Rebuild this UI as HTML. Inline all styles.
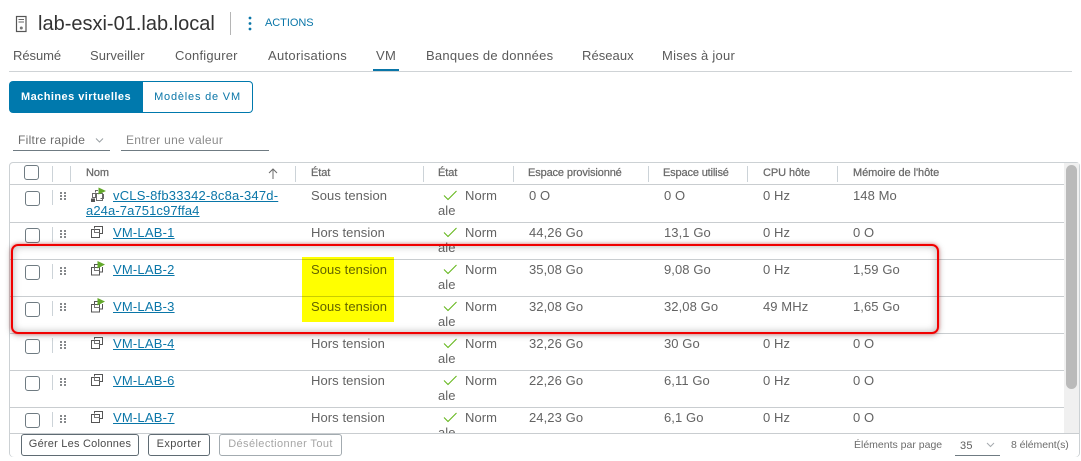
<!DOCTYPE html>
<html><head><meta charset="utf-8">
<style>
html,body{margin:0;padding:0;background:#fff}
#p{position:relative;width:1081px;height:461px;overflow:hidden;background:#fff;font-family:"Liberation Sans",sans-serif;color:#565656;font-size:13px}
#p div,#p a,#p svg{position:absolute;white-space:nowrap}
.t{font-size:13px;line-height:16px;letter-spacing:.08px;color:#636363}
.tab{top:47px;font-size:13px;line-height:18px;letter-spacing:.15px;color:#5a5a5a}
.h{top:166px;font-size:11px;line-height:14px;color:#6a6a6a;letter-spacing:-.08px;-webkit-text-stroke:.25px #6a6a6a}
.sep{width:1px;background:#ccd3d8}
.line{left:10px;width:1054px;height:1px;background:#c9cdd0}
.cb{left:25px;width:13px;height:13px;border:1px solid #6f7b82;border-radius:3px;background:#fff}
.lk{color:#0a76a8;text-decoration:underline;font-size:13px;line-height:16px;letter-spacing:.2px}
.btn{top:434px;height:22px;border:1px solid #5f6b73;border-radius:3px;font-size:11px;line-height:19px;text-align:center;color:#4a4a4a;box-sizing:border-box;background:#fff}
</style></head><body><div id="p">

<!-- Header -->
<svg style="left:15px;top:15px" width="13" height="18" viewBox="0 0 13 18"><rect x="1.500" y="1.500" width="9.500" height="15" fill="none" stroke="#555" stroke-width="1.200"/><path d="M3.500 4.500h5.500M3.500 7h5.500" stroke="#666"/><circle cx="6.300" cy="13" r="1.500" fill="#777"/></svg>
<div style="left:38px;top:10px;font-size:20px;line-height:28px;color:#333">lab-esxi-01.lab.local</div>
<div class="sep" style="left:230px;top:12px;height:23px;background:#b5b5b5"></div>
<svg style="left:247px;top:15px" width="6" height="17" viewBox="0 0 6 17"><circle cx="3" cy="3" r="1.400" fill="#0a76a8"/><circle cx="3" cy="8.500" r="1.400" fill="#0a76a8"/><circle cx="3" cy="14" r="1.400" fill="#0a76a8"/></svg>
<div style="left:265px;top:16px;font-size:11px;line-height:14px;color:#0a76a8;letter-spacing:-.05px">ACTIONS</div>

<!-- Tabs -->
<div class="tab" style="left:13px;letter-spacing:-.05px">Résumé</div>
<div class="tab" style="left:90px;letter-spacing:.05px">Surveiller</div>
<div class="tab" style="left:175px;letter-spacing:.2px">Configurer</div>
<div class="tab" style="left:268px;letter-spacing:.3px">Autorisations</div>
<div class="tab" style="left:376px;letter-spacing:.3px">VM</div>
<div class="tab" style="left:426px;letter-spacing:.25px">Banques de données</div>
<div class="tab" style="left:582px;letter-spacing:.05px">Réseaux</div>
<div class="tab" style="left:662px;letter-spacing:.25px">Mises à jour</div>
<div style="left:9px;top:71px;width:1063px;height:1px;background:#cfd3d6"></div>
<div style="left:373px;top:69px;width:26px;height:2px;background:#0a76a8"></div>

<!-- Segmented buttons -->
<div style="left:9px;top:81px;width:134px;height:32px;background:#0079ad;border-radius:4px 0 0 4px;color:#fff;font-size:11px;line-height:32px;font-weight:bold;text-align:center;letter-spacing:.45px">Machines virtuelles</div>
<div style="left:143px;top:81px;width:110px;height:32px;box-sizing:border-box;border:1px solid #0079ad;border-left:0;border-radius:0 4px 4px 0;color:#0a76a8;font-size:11px;line-height:30px;text-align:center;letter-spacing:.8px">Modèles de VM</div>

<!-- Filter -->
<div style="left:18px;top:132px;font-size:12px;line-height:16px;color:#6c6c6c;letter-spacing:.3px">Filtre rapide</div>
<svg style="left:94px;top:136px" width="11" height="9" viewBox="0 0 11 9"><path d="M2 2.500l3.500 3.500L9 2.500" fill="none" stroke="#9aa0a4"/></svg>
<div style="left:13px;top:150px;width:97px;height:1px;background:#6f7b82"></div>
<div style="left:126px;top:132px;font-size:12px;line-height:16px;color:#8a8a8a;letter-spacing:.3px">Entrer une valeur</div>
<div style="left:121px;top:150px;width:148px;height:1px;background:#6f7b82"></div>

<!-- Table frame -->
<div style="left:9px;top:162px;width:1071px;height:295px;box-sizing:border-box;border:1px solid #ccd1d4;border-radius:4px"></div>

<!-- Header row -->
<div class="cb" style="left:24px;top:165px"></div>
<div class="sep" style="left:52px;top:166px;height:16px"></div>
<div class="sep" style="left:70px;top:166px;height:16px"></div>
<div class="h" style="left:86px">Nom</div>
<svg style="left:267px;top:167px" width="12" height="13" viewBox="0 0 12 13"><path d="M6 12V2M2 6l4-4 4 4" fill="none" stroke="#6b6b6b"/></svg>
<div class="sep" style="left:295px;top:166px;height:16px"></div>
<div class="h" style="left:311px">État</div>
<div class="sep" style="left:423px;top:166px;height:16px"></div>
<div class="h" style="left:438px">État</div>
<div class="sep" style="left:513px;top:166px;height:16px"></div>
<div class="h" style="left:528px;letter-spacing:-.13px">Espace provisionné</div>
<div class="sep" style="left:648px;top:166px;height:16px"></div>
<div class="h" style="left:663px;letter-spacing:-.15px">Espace utilisé</div>
<div class="sep" style="left:747px;top:166px;height:16px"></div>
<div class="h" style="left:763px">CPU hôte</div>
<div class="sep" style="left:837px;top:166px;height:16px"></div>
<div class="h" style="left:853px;letter-spacing:-.05px">Mémoire de l'hôte</div>

<div class="line" style="top:184px"></div>
<div class="line" style="top:222px"></div>
<div class="line" style="top:259px"></div>
<div class="line" style="top:296px"></div>
<div class="line" style="top:333px"></div>
<div class="line" style="top:370px"></div>
<div class="line" style="top:407px"></div>

<!-- Row 1 -->
<div class="cb" style="top:191px"></div><div class="sep" style="left:52px;top:190px;height:15px"></div>
<svg style="left:60px;top:192px" width="6" height="8"><path d="M0 0h2v2H0zM4 0h2v2H4zM0 3h2v2H0zM4 3h2v2H4zM0 6h2v2H0zM4 6h2v2H4z" fill="#85888b"/></svg>
<svg style="left:90px;top:187px" width="17" height="16" viewBox="0 0 17 16"><path d="M5.500 5.500V3.500h2.500M13.500 7v4.500h-3M6.500 6.500h6v7h-6zM2.500 6.500h3v4h-3z" fill="none" stroke="#6a6a6a"/><path d="M1 11.500h4v3.500H1z" fill="#555"/><path d="M8.500 0.500l7.500 3.500-7.500 3.500z" fill="#62a82a"/></svg>
<a class="lk" style="left:113px;top:188px">vCLS-8fb33342-8c8a-347d-</a>
<a class="lk" style="left:86px;top:203px;letter-spacing:.1px">a24a-7a751c97ffa4</a>
<div class="t" style="left:311px;top:188px">Sous tension</div>
<svg style="left:443px;top:190px" width="15" height="11" viewBox="0 0 15 11"><path d="M1 5.500l4 4L13.500 1" fill="none" stroke="#60b515" stroke-width="1"/></svg>
<div class="t" style="left:465px;top:188px">Norm</div><div class="t" style="left:438px;top:203px">ale</div>
<div class="t" style="left:529px;top:188px">0 O</div><div class="t" style="left:664px;top:188px">0 O</div><div class="t" style="left:763px;top:188px">0 Hz</div><div class="t" style="left:853px;top:188px">148 Mo</div>

<!-- Row 2 -->
<div class="cb" style="top:228px"></div><div class="sep" style="left:52px;top:227px;height:15px"></div>
<svg style="left:60px;top:230px" width="6" height="8"><path d="M0 0h2v2H0zM4 0h2v2H4zM0 3h2v2H0zM4 3h2v2H4zM0 6h2v2H0zM4 6h2v2H4z" fill="#85888b"/></svg>
<svg style="left:90px;top:225px" width="14" height="14" viewBox="0 0 14 14"><path d="M4.500 3.500V1.500h8v7h-3M1.500 4.500h8v8h-8z" fill="none" stroke="#555"/><path d="M4.500 4.500v3h5" fill="none" stroke="#777"/></svg>
<a class="lk" style="left:113px;top:225px">VM-LAB-1</a>
<div class="t" style="left:311px;top:225px">Hors tension</div>
<svg style="left:443px;top:227px" width="15" height="11" viewBox="0 0 15 11"><path d="M1 5.500l4 4L13.500 1" fill="none" stroke="#60b515" stroke-width="1"/></svg>
<div class="t" style="left:465px;top:225px">Norm</div><div class="t" style="left:438px;top:240px">ale</div>
<div class="t" style="left:529px;top:225px">44,26 Go</div><div class="t" style="left:664px;top:225px">13,1 Go</div><div class="t" style="left:763px;top:225px">0 Hz</div><div class="t" style="left:853px;top:225px">0 O</div>

<!-- Row 3 -->
<div class="cb" style="top:265px"></div><div class="sep" style="left:52px;top:264px;height:15px"></div>
<svg style="left:60px;top:267px" width="6" height="8"><path d="M0 0h2v2H0zM4 0h2v2H4zM0 3h2v2H0zM4 3h2v2H4zM0 6h2v2H0zM4 6h2v2H4z" fill="#85888b"/></svg>
<svg style="left:90px;top:261px" width="15" height="16" viewBox="0 0 15 16"><path d="M4.500 6V3.500h3M12.500 6v5h-3M1.500 6.500h8v7.500h-8z" fill="none" stroke="#555"/><path d="M4.500 6.500v3h5" fill="none" stroke="#777"/><path d="M7.500 0l7.500 3.500L7.500 7.500z" fill="#62a82a"/></svg>
<a class="lk" style="left:113px;top:262px">VM-LAB-2</a>
<div class="t" style="left:311px;top:262px">Sous tension</div>
<svg style="left:443px;top:264px" width="15" height="11" viewBox="0 0 15 11"><path d="M1 5.500l4 4L13.500 1" fill="none" stroke="#60b515" stroke-width="1"/></svg>
<div class="t" style="left:465px;top:262px">Norm</div><div class="t" style="left:438px;top:277px">ale</div>
<div class="t" style="left:529px;top:262px">35,08 Go</div><div class="t" style="left:664px;top:262px">9,08 Go</div><div class="t" style="left:763px;top:262px">0 Hz</div><div class="t" style="left:853px;top:262px">1,59 Go</div>

<!-- Row 4 -->
<div class="cb" style="top:302px"></div><div class="sep" style="left:52px;top:301px;height:15px"></div>
<svg style="left:60px;top:303px" width="6" height="8"><path d="M0 0h2v2H0zM4 0h2v2H4zM0 3h2v2H0zM4 3h2v2H4zM0 6h2v2H0zM4 6h2v2H4z" fill="#85888b"/></svg>
<svg style="left:90px;top:298px" width="15" height="16" viewBox="0 0 15 16"><path d="M4.500 6V3.500h3M12.500 6v5h-3M1.500 6.500h8v7.500h-8z" fill="none" stroke="#555"/><path d="M4.500 6.500v3h5" fill="none" stroke="#777"/><path d="M7.500 0l7.500 3.500L7.500 7.500z" fill="#62a82a"/></svg>
<a class="lk" style="left:113px;top:299px">VM-LAB-3</a>
<div class="t" style="left:311px;top:299px">Sous tension</div>
<svg style="left:443px;top:301px" width="15" height="11" viewBox="0 0 15 11"><path d="M1 5.500l4 4L13.500 1" fill="none" stroke="#60b515" stroke-width="1"/></svg>
<div class="t" style="left:465px;top:299px">Norm</div><div class="t" style="left:438px;top:314px">ale</div>
<div class="t" style="left:529px;top:299px">32,08 Go</div><div class="t" style="left:664px;top:299px">32,08 Go</div><div class="t" style="left:763px;top:299px">49 MHz</div><div class="t" style="left:853px;top:299px">1,65 Go</div>

<!-- Row 5 -->
<div class="cb" style="top:339px"></div><div class="sep" style="left:52px;top:338px;height:15px"></div>
<svg style="left:60px;top:341px" width="6" height="8"><path d="M0 0h2v2H0zM4 0h2v2H4zM0 3h2v2H0zM4 3h2v2H4zM0 6h2v2H0zM4 6h2v2H4z" fill="#85888b"/></svg>
<svg style="left:90px;top:336px" width="14" height="14" viewBox="0 0 14 14"><path d="M4.500 3.500V1.500h8v7h-3M1.500 4.500h8v8h-8z" fill="none" stroke="#555"/><path d="M4.500 4.500v3h5" fill="none" stroke="#777"/></svg>
<a class="lk" style="left:113px;top:336px">VM-LAB-4</a>
<div class="t" style="left:311px;top:336px">Hors tension</div>
<svg style="left:443px;top:338px" width="15" height="11" viewBox="0 0 15 11"><path d="M1 5.500l4 4L13.500 1" fill="none" stroke="#60b515" stroke-width="1"/></svg>
<div class="t" style="left:465px;top:336px">Norm</div><div class="t" style="left:438px;top:351px">ale</div>
<div class="t" style="left:529px;top:336px">32,26 Go</div><div class="t" style="left:664px;top:336px">30 Go</div><div class="t" style="left:763px;top:336px">0 Hz</div><div class="t" style="left:853px;top:336px">0 O</div>

<!-- Row 6 -->
<div class="cb" style="top:376px"></div><div class="sep" style="left:52px;top:375px;height:15px"></div>
<svg style="left:60px;top:378px" width="6" height="8"><path d="M0 0h2v2H0zM4 0h2v2H4zM0 3h2v2H0zM4 3h2v2H4zM0 6h2v2H0zM4 6h2v2H4z" fill="#85888b"/></svg>
<svg style="left:90px;top:373px" width="14" height="14" viewBox="0 0 14 14"><path d="M4.500 3.500V1.500h8v7h-3M1.500 4.500h8v8h-8z" fill="none" stroke="#555"/><path d="M4.500 4.500v3h5" fill="none" stroke="#777"/></svg>
<a class="lk" style="left:113px;top:373px">VM-LAB-6</a>
<div class="t" style="left:311px;top:373px">Hors tension</div>
<svg style="left:443px;top:375px" width="15" height="11" viewBox="0 0 15 11"><path d="M1 5.500l4 4L13.500 1" fill="none" stroke="#60b515" stroke-width="1"/></svg>
<div class="t" style="left:465px;top:373px">Norm</div><div class="t" style="left:438px;top:388px">ale</div>
<div class="t" style="left:529px;top:373px">22,26 Go</div><div class="t" style="left:664px;top:373px">6,11 Go</div><div class="t" style="left:763px;top:373px">0 Hz</div><div class="t" style="left:853px;top:373px">0 O</div>

<!-- Row 7 -->
<div class="cb" style="top:413px"></div><div class="sep" style="left:52px;top:412px;height:15px"></div>
<svg style="left:60px;top:415px" width="6" height="8"><path d="M0 0h2v2H0zM4 0h2v2H4zM0 3h2v2H0zM4 3h2v2H4zM0 6h2v2H0zM4 6h2v2H4z" fill="#85888b"/></svg>
<svg style="left:90px;top:410px" width="14" height="14" viewBox="0 0 14 14"><path d="M4.500 3.500V1.500h8v7h-3M1.500 4.500h8v8h-8z" fill="none" stroke="#555"/><path d="M4.500 4.500v3h5" fill="none" stroke="#777"/></svg>
<a class="lk" style="left:113px;top:410px">VM-LAB-7</a>
<div class="t" style="left:311px;top:410px">Hors tension</div>
<svg style="left:443px;top:412px" width="15" height="11" viewBox="0 0 15 11"><path d="M1 5.500l4 4L13.500 1" fill="none" stroke="#60b515" stroke-width="1"/></svg>
<div class="t" style="left:465px;top:410px">Norm</div><div class="t" style="left:438px;top:425px">ale</div>
<div class="t" style="left:529px;top:410px">24,23 Go</div><div class="t" style="left:664px;top:410px">6,1 Go</div><div class="t" style="left:763px;top:410px">0 Hz</div><div class="t" style="left:853px;top:410px">0 O</div>

<!-- Highlight (multiplied so row line and text show through) -->
<div style="left:302px;top:257px;width:92px;height:65px;background:#ffff00;mix-blend-mode:multiply"></div>

<!-- Scrollbar -->
<div style="left:1064px;top:163px;width:15px;height:270px;background:#f0f0f0"></div>
<div style="left:1066px;top:165px;width:11px;height:224px;background:#bababa;border-radius:6px"></div>

<!-- Footer -->
<div style="left:10px;top:433px;width:1069px;height:23px;background:#fff;border-top:1px solid #c9cdd0;border-radius:0 0 4px 4px"></div>
<div class="btn" style="left:21px;width:118px;letter-spacing:.22px">Gérer Les Colonnes</div>
<div class="btn" style="left:148px;width:62px;letter-spacing:.4px">Exporter</div>
<div class="btn" style="left:219px;width:123px;color:#a5a5a5;border-color:#a3abb0;letter-spacing:.4px">Désélectionner Tout</div>
<div style="left:854px;top:438px;font-size:10.500px;line-height:14px;color:#6c6c6c">Éléments par page</div>
<div style="left:960px;top:439px;font-size:11px;line-height:14px;color:#5f5f5f;letter-spacing:.3px">35</div>
<svg style="left:985px;top:441px" width="11" height="9" viewBox="0 0 11 9"><path d="M2 2l3.500 3.500L9 2" fill="none" stroke="#a5aaae"/></svg>
<div style="left:955px;top:455px;width:45px;height:1px;background:#6f7b82"></div>
<div style="left:1011px;top:438px;font-size:10.500px;line-height:14px;color:#6c6c6c;letter-spacing:-.05px">8 élément(s)</div>

<!-- Red annotation box -->
<div style="left:11px;top:244px;width:928px;height:90px;box-sizing:border-box;border:2px solid #f00000;border-radius:7px;box-shadow:0 0 3px rgba(255,0,0,.45),0 1px 7px rgba(0,0,0,.28),inset 0 0 8px rgba(0,0,0,.3)"></div>

</div></body></html>
